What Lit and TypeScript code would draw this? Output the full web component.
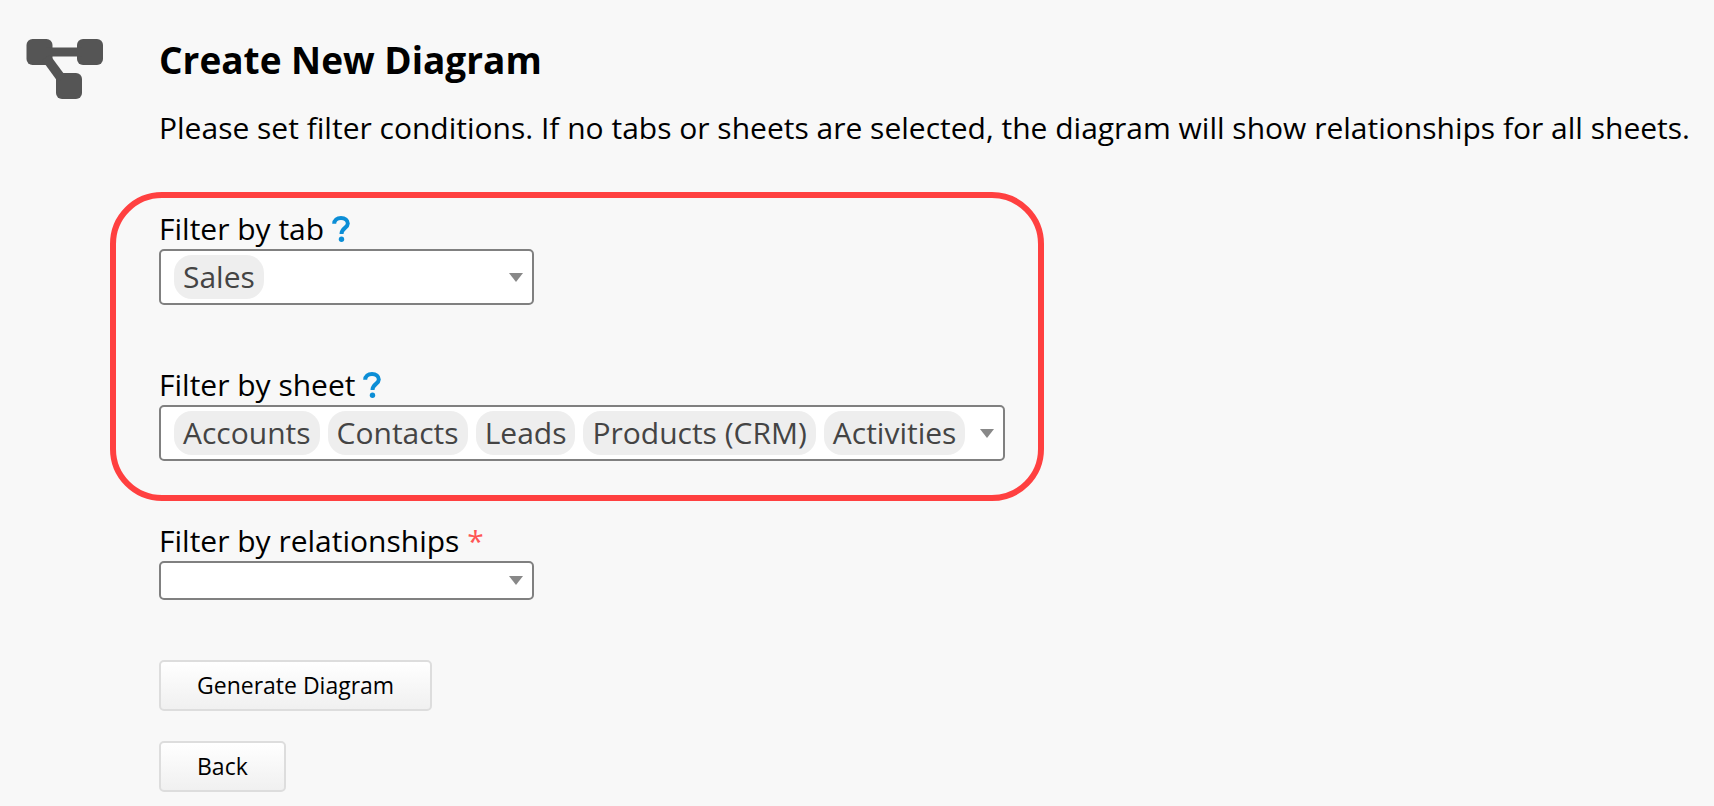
import { LitElement, html, css } from "lit";
import { customElement, property } from "lit/decorators.js";

@customElement("chip-select")
class ChipSelect extends LitElement {
  @property() label = "";
  @property({ type: Array }) items: string[] = [];

  static styles = css`
    :host { display: flex; flex-direction: column; align-items: flex-start; }
    .caption { display: flex; align-items: center; gap: 8px; line-height: 40px; }
    .help { display: flex; width: 18px; }
    .help svg { display: block; }
    .box {
      display: flex; align-items: center; justify-content: space-between; gap: 15px;
      box-sizing: border-box; min-width: 375px; min-height: 56px;
      padding: 4px 9px 4px 13px; border: 2px solid #808080; border-radius: 5px;
      background: #fff; color: #444; font: inherit; cursor: pointer;
    }
    .chips { display: flex; flex-wrap: wrap; gap: 8px; }
    .chip { padding: 0 9px; border-radius: 18px; background: #eee; line-height: 44px; }
    .arrow { display: block; flex: none; }
  `;

  render() {
    return html`
      <div class="caption">
        <label for="box">${this.label}</label>
        <a class="help" href="#" aria-label="Help">
          <svg width="18" height="28" viewBox="0 0 18 28" fill="none">
            <path d="M2.200 8.800C2.200 5 5 3 9 3C13 3 15.800 5.200 15.800 8.500C15.800 13 9.500 13 9.500 19" stroke="#0c8ed6" stroke-width="4"/>
            <circle cx="9.500" cy="24.200" r="2.700" fill="#0c8ed6"/>
          </svg>
        </a>
      </div>
      <button id="box" class="box" type="button" aria-haspopup="listbox">
        <span class="chips">${this.items.map((i) => html`<span class="chip">${i}</span>`)}</span>
        <svg class="arrow" width="14" height="9" viewBox="0 0 14 9"><path d="M0 0H14L7 9Z" fill="#888"/></svg>
      </button>
    `;
  }
}

@customElement("app-root")
class AppRoot extends LitElement {
  static styles = css`
    :host {
      display: block; box-sizing: border-box; min-height: 100vh;
      padding: 35px 16px 14px 26px; background: #f8f8f8; color: #000;
      font: 30px/40px "Open Sans", "Noto Sans", sans-serif;
    }
    .page { display: grid; grid-template-columns: 84px minmax(0, 1fr); }
    .icon { display: block; margin-top: 4px; }
    .inset { padding-left: 49px; }
    h1 { margin: 0 0 23px; font-size: 37px; line-height: 50px; font-weight: 700; }
    p { margin: 0; }
    .marked {
      display: flex; flex-direction: column; gap: 60px;
      box-sizing: border-box; width: fit-content; max-width: 100%;
      margin: 44px 0 20px; padding: 11px 33px 34px 43px;
      border: 6px solid #ff4040; border-radius: 52px;
    }
    .field { display: flex; flex-direction: column; align-items: flex-start; }
    .required { color: #f55; }
    .wrap { display: grid; align-items: center; width: 375px; }
    .wrap > * { grid-area: 1 / 1; }
    select {
      appearance: none; box-sizing: border-box; width: 100%; height: 39px; margin: 0;
      border: 2px solid #808080; border-radius: 5px; background: #fff; font: inherit;
    }
    .arrow { justify-self: end; margin-right: 11px; pointer-events: none; }
    .actions { display: flex; flex-direction: column; align-items: flex-start; gap: 30px; margin-top: 60px; }
    .btn {
      padding: 8px 36px; border: 2px solid #ddd; border-radius: 5px;
      background: linear-gradient(#fff, #f0f0f0); color: #000;
      font: inherit; font-size: 23px; line-height: 31px; cursor: pointer;
    }
  `;

  render() {
    return html`
      <main class="page">
        <svg class="icon" width="77" height="60" viewBox="0 0 77 60" fill="#555" aria-hidden="true">
          <rect x="0.500" width="26" height="26" rx="6"/>
          <rect x="51" width="26" height="26" rx="6"/>
          <rect x="30" y="34" width="26" height="26" rx="6"/>
          <path d="M20 8.500H56V17.500H20Z"/>
          <path d="M16 21L24 16L39.500 37L32 43Z"/>
        </svg>
        <div>
          <header class="inset">
            <h1>Create New Diagram</h1>
            <p>Please set filter conditions. If no tabs or sheets are selected, the diagram will show relationships for all sheets.</p>
          </header>
          <section class="marked">
            <chip-select label="Filter by tab" .items=${["Sales"]}></chip-select>
            <chip-select label="Filter by sheet" .items=${["Accounts", "Contacts", "Leads", "Products (CRM)", "Activities"]}></chip-select>
          </section>
          <div class="inset">
            <div class="field">
              <label for="rel">Filter by relationships <span class="required">*</span></label>
              <div class="wrap">
                <select id="rel" required><option value=""></option></select>
                <svg class="arrow" width="14" height="9" viewBox="0 0 14 9"><path d="M0 0H14L7 9Z" fill="#888"/></svg>
              </div>
            </div>
            <div class="actions">
              <button class="btn" type="button">Generate Diagram</button>
              <button class="btn" type="button">Back</button>
            </div>
          </div>
        </div>
      </main>
    `;
  }
}
